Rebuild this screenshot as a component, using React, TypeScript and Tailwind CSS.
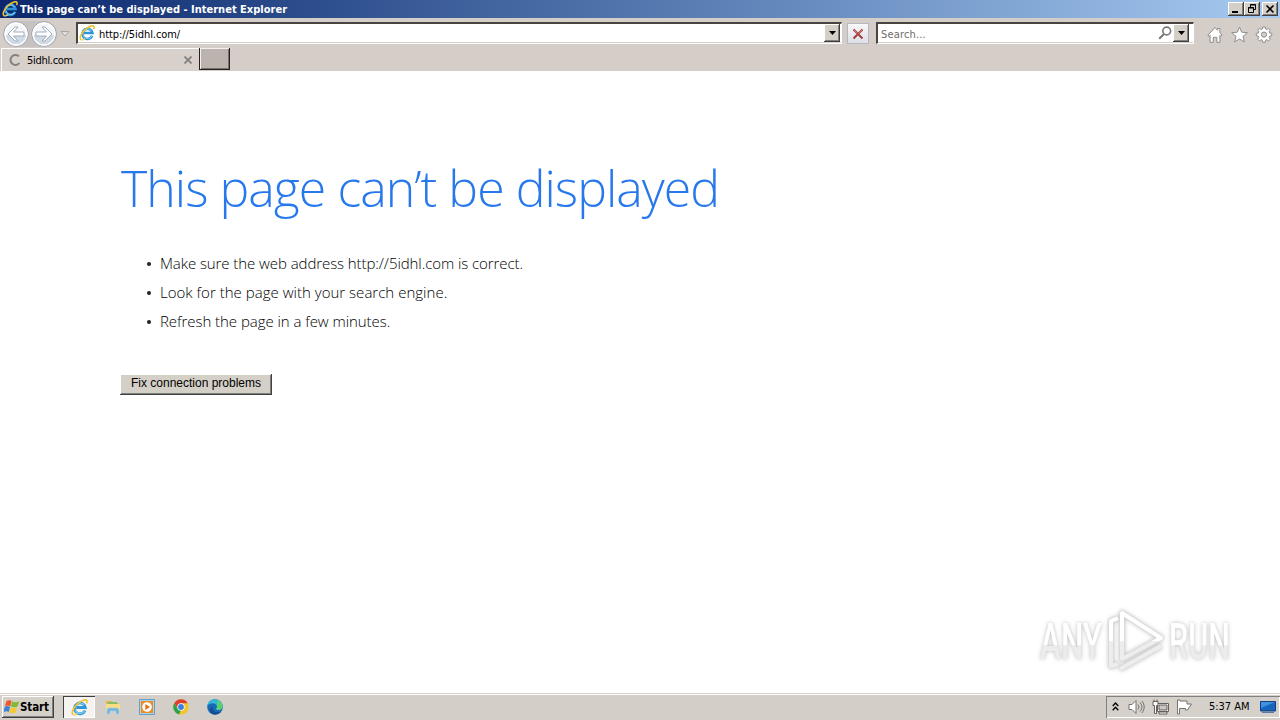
import type { ReactNode } from 'react';

const tips = [
  { text: 'Make sure the web address http://5idhl.com is correct.', tracking: 'tracking-[-0.075px]' },
  { text: 'Look for the page with your search engine.', tracking: 'tracking-[0.02px]' },
  { text: 'Refresh the page in a few minutes.', tracking: 'tracking-[-0.05px]' },
];

const uiFont = "font-['DejaVu_Sans_Condensed','DejaVu_Sans',sans-serif]";
const raised = 'bg-[#d4d0c8] shadow-[inset_-1px_-1px_#404040,inset_1px_1px_#fff,inset_-2px_-2px_#808080]';

function IeIcon({ className }: { className: string }) {
  return (
    <svg viewBox="0 0 16 16" className={className} fill="none">
      <path d="M13.2 10.8A5.1 5.1 0 1 1 13.5 8H5" stroke="#2e96d8" strokeWidth="2.6" />
      <path d="M12.9 11A4.8 4.8 0 0 1 4 10M4.4 6.6a4.6 4.6 0 0 1 8-.8" stroke="#7fd0f3" strokeWidth="1" />
      <path d="M2.2 14.7C-.5 13 3 7 7.2 3.7 10.5 1.1 14.4-.3 15 1.7c.2.7 0 1.5-.4 2.4" stroke="#f2c12e" strokeWidth="1.6" />
      <path d="M2.2 14.7c1 .5 2.7-.1 4-.9" stroke="#f6d666" strokeWidth="1.3" />
    </svg>
  );
}

function NavButton({ flip }: { flip?: boolean }) {
  return (
    <svg viewBox="0 0 26 26" className="h-[26px] w-[26px] shrink-0">
      <circle cx="13" cy="13" r="12.2" fill="#f3f5f8" stroke="#929aa5" />
      <path d="M2 14h22a11 11 0 0 1-22 0z" fill="#cfdae5" />
      <circle cx="13" cy="13" r="11" fill="none" stroke="#fff" strokeWidth="1.4" />
      <path
        d="M5 13l7-7h3l-4.5 5H21v4H10.5l4.5 5h-3z"
        fill="#fff"
        stroke="#9ba6b4"
        strokeWidth=".9"
        transform={flip ? 'translate(26 0) scale(-1 1)' : undefined}
      />
    </svg>
  );
}

function DropButton() {
  return (
    <button className={`flex h-[18px] w-4 shrink-0 items-center justify-center ${raised}`}>
      <svg viewBox="0 0 7 4" className="h-1 w-[7px]"><path d="M0 0h7L3.5 4z" /></svg>
    </button>
  );
}

function WinButton({ children }: { children: ReactNode }) {
  return (
    <button className={`h-[14px] w-4 ${raised}`}>
      <svg viewBox="0 0 16 14" className="h-[14px] w-4" fill="none" stroke="#000">{children}</svg>
    </button>
  );
}

function TitleBar() {
  return (
    <div className="flex h-[18px] items-center bg-linear-to-r from-[#0c276d] to-[#a6caf0] pr-[2px] pl-[2px]">
      <IeIcon className="h-4 w-4 shrink-0" />
      <span className="ml-[2px] pt-px text-[11px] leading-[17px] font-bold tracking-[0.01px] whitespace-nowrap text-white">
        This page can’t be displayed - Internet Explorer
      </span>
      <div className="ml-auto flex">
        <WinButton><path d="M4 10h6" strokeWidth="2" /></WinButton>
        <WinButton>
          <path d="M6.5 6V2.5h5v5H10M6 3h6" />
          <path d="M4.5 5.5h5v5h-5zM4 6h6" />
        </WinButton>
        <div className="ml-[2px] flex">
          <WinButton><path d="M4.5 3.5l7 7M11.5 3.5l-7 7" strokeWidth="1.6" /></WinButton>
        </div>
      </div>
    </div>
  );
}

function AddressRow() {
  const field = 'flex h-[22px] items-start border-t-2 border-l-2 border-r border-b border-t-[#48443f] border-l-[#48443f] border-r-white border-b-white bg-white shadow-[inset_0_-1px_#d4d0c8]';
  return (
    <div className="flex h-[30px] items-start pt-1">
      <div className="ml-[3px] flex gap-[2px] rounded-full bg-[#bcbbbd]/60 -mt-px">
        <NavButton />
        <NavButton flip />
      </div>
      <svg viewBox="0 0 10 6" className="mt-[9px] ml-[3px] h-[6px] w-[10px]"><path d="M1 .5h8L5 5z" fill="#e2dfdb" stroke="#aaa6a1" /></svg>
      <div className={`ml-[6px] w-[766px] ${field}`}>
        <IeIcon className="mt-px ml-px h-4 w-4" />
        <span className="ml-1 pt-[2px] text-[11px] leading-[17px] tracking-[-0.07px]">http://5idhl.com/</span>
        <div className="mr-px ml-auto"><DropButton /></div>
      </div>
      <button className="mt-px ml-[5px] flex h-[21px] w-[22px] items-center justify-center border border-[#b6b7c0] bg-linear-to-b from-[#f8f8fa] to-[#dedfe7]">
        <svg viewBox="0 0 12 12" className="h-3 w-3" fill="none">
          <path d="M1.5 1.5l9 9M10.5 1.5l-9 9" stroke="#a33c40" strokeWidth="2" />
          <path d="M1.5 1.5l4 4M10.5 1.5l-4 4" stroke="#d77877" strokeWidth="1" />
        </svg>
      </button>
      <div className={`ml-[7px] w-[318px] ${field}`}>
        <span className="ml-[3px] pt-[2px] text-[11px] leading-[17px] tracking-[0.17px] text-[#706d6a]">Search...</span>
        <svg viewBox="0 0 14 14" className="mt-[2px] ml-auto h-[14px] w-[14px]" fill="none" stroke="#77777a" strokeWidth="1.6">
          <circle cx="8.7" cy="5" r="3.9" />
          <path d="M6 8l-4.8 4.7" strokeWidth="2" />
        </svg>
        <div className="mr-1 ml-[1px]"><DropButton /></div>
      </div>
      <svg viewBox="0 0 66 18" className="mt-1 ml-[13px] h-[18px] w-[66px]" fill="#fff" stroke="#8e8d8d">
        <path d="M.8 9.3L8 1.6l2.6 2.7V2.5h2.3v4.2l2.3 2.6-1.3 1-1-1v7H9.8v-5H6.3v5H3.1v-7l-1 1z" />
        <path d="M32.5 1l2.2 5.2 5.6.5-4.3 3.7 1.4 5.5-4.9-2.9-4.9 2.9 1.4-5.5-4.3-3.7 5.6-.5z" />
        <path d="M55.8 1h2.4l.4 2 1.3.5 1.7-1.2L63.3 4l-1.2 1.7.5 1.3 2.1.4v2.4l-2.1.4-.5 1.3 1.2 1.7-1.7 1.7-1.7-1.2-1.3.5-.4 2.1h-2.4l-.4-2.1-1.3-.5-1.7 1.2-1.7-1.7 1.2-1.7-.5-1.3-2.1-.4V7.4l2.1-.4.5-1.3L50.7 4l1.7-1.7 1.7 1.2 1.3-.5z" />
        <circle cx="57" cy="8.6" r="2.6" fill="#d4cdc8" />
      </svg>
    </div>
  );
}

function Tabs() {
  return (
    <div className="flex h-[23px] items-start">
      <div className="ml-[1px] flex h-[23px] w-[198px] items-center border-t border-l border-white bg-[#d8d0cb] pr-[7px] pl-[7px]">
        <svg viewBox="0 0 12 12" className="h-3 w-3" fill="none"><path d="M10 2.4A5 5 0 1 0 10.5 9" stroke="#85817e" strokeWidth="2" /></svg>
        <span className="ml-[6px] pt-[2px] text-[11px] tracking-[-0.3px]">5idhl.com</span>
        <svg viewBox="0 0 8 8" className="ml-auto h-2 w-2"><path d="M.5.5l7 7M7.5.5l-7 7" stroke="#827d79" strokeWidth="1.7" /></svg>
      </div>
      <button className="h-[22px] w-[31px] border-r border-b border-l border-[#24211f] bg-[#bcb3ae] shadow-[inset_1px_1px_#f5f0ec,inset_-1px_-1px_#77716d]" />
    </div>
  );
}

function Watermark() {
  return (
    <svg viewBox="0 0 214 76" className="absolute right-[32px] bottom-[11px] h-[76px] w-[214px] overflow-visible drop-shadow-[0_0_2px_#bbb]">
      <defs>
        <linearGradient id="word" x1="0" y1="0" x2="0" y2="1">
          <stop offset="56%" stopColor="#fff" />
          <stop offset="57%" stopColor="#ececec" />
        </linearGradient>
        <linearGradient id="mark" gradientUnits="userSpaceOnUse" x1="0" y1="4" x2="0" y2="66">
          <stop offset="50%" stopColor="#fff" />
          <stop offset="51%" stopColor="#ededed" />
        </linearGradient>
      </defs>
      <g fill="url(#word)" className="font-['Roboto',sans-serif] text-[50px] font-medium">
        <text transform="translate(6 52.5) scale(.63 1)">ANY</text>
        <text transform="translate(135 52.5) scale(.61 1)">RUN</text>
      </g>
      <g fill="none" strokeLinejoin="round">
        <path d="M88 7V53L127 32ZM84 12l-7 3v45l7-2M86 63l41-23" stroke="#dadada" strokeWidth="5.2" />
        <path d="M88 7V53L127 32ZM84 12l-7 3v45l7-2M86 63l41-23" stroke="url(#mark)" strokeWidth="4" />
      </g>
    </svg>
  );
}

function Taskbar() {
  return (
    <footer className="flex h-[27px] shrink-0 items-start border-t border-[#d4d0c8] bg-[#d4cec8] pt-[2px] shadow-[inset_0_1px_#fff]">
      <button className={`ml-[2px] flex h-[22px] w-[52px] items-center pl-[2px] ${raised}`}>
        <svg viewBox="0 0 16 16" className="h-4 w-4 shrink-0">
          <path d="M2.4 2.2C4.5.8 6 1 7.7 2.1L6.3 7.3C4.6 6.2 3 6.2 1 7.2z" fill="#ee572a" />
          <path d="M8.3 2.4c1.7 1 4.5 1 7-.1L13.5 7.6c-2 1-4.6 1-6.6 0z" fill="#81ba35" />
          <path d="M.8 7.8c2-1 3.6-.9 5.3.1l-1.4 5.2c-1.7-1-3.2-1-5.2.1z" fill="#3a83d0" />
          <path d="M6.7 8.2c1.7 1 4.3 1 6.5 0l-1.5 5.4c-2.1 1-4.4 1-6.4 0z" fill="#f8c931" />
        </svg>
        <span className="pt-px text-[11.5px] font-bold tracking-[-0.1px]">Start</span>
      </button>
      <div className="ml-[9px] flex h-[22px] w-8 items-center justify-center bg-[#f5f3f1] shadow-[inset_1px_1px_#404040,inset_-1px_-1px_#fff]">
        <IeIcon className="h-[17px] w-[17px]" />
      </div>
      <div className="mt-[3px] ml-[10px] flex gap-[18px]">
        <svg viewBox="0 0 16 16" className="h-4 w-4">
          <path d="M1 2h6l1 2h6v8H1z" fill="#dfb94e" />
          <path d="M3 3h9v5H3z" fill="#87bd68" />
          <path d="M1 5h14v7H1z" fill="#f7dd83" />
          <path d="M2 15v-4q0-2 2-2h8q2 0 2 2v4h-3v-3H5v3z" fill="#71b4df" stroke="#a4d5ee" strokeWidth=".6" />
        </svg>
        <svg viewBox="0 0 16 16" className="h-4 w-4">
          <path d="M.5.5h15v15H.5z" fill="#a9d5ef" stroke="#659fc9" />
          <path d="M2 2h12v12H2z" fill="#ee8b20" />
          <circle cx="8" cy="8" r="4.8" fill="#fff" />
          <path d="M6.3 5l4.7 3-4.7 3z" fill="#e86f12" />
        </svg>
        <svg viewBox="0 0 16 16" className="h-4 w-4">
          <circle cx="8" cy="8" r="7.7" fill="#f4c62e" />
          <path d="M1.3 4.1A7.7 7.7 0 0 1 14.7 4.2H8L5 10z" fill="#dc3f30" />
          <path d="M1.3 4.1L5 10l3 1.6-2 3.8A7.7 7.7 0 0 1 1.3 4.1z" fill="#2aa34c" />
          <circle cx="8" cy="8" r="3.7" fill="#fff" />
          <circle cx="8" cy="8" r="2.9" fill="#397de0" />
        </svg>
        <svg viewBox="0 0 16 16" className="h-4 w-4">
          <circle cx="8" cy="8" r="7.8" fill="#1869b7" />
          <path d="M.3 7C1 .8 7-.8 11.2 1.1 15.5 3 16.6 8 14.4 10c-2 1.7-5.2.7-5.1-.4.1-1 1.3-1.1.4-3C8 3.4 2.9 3.3.3 7z" fill="#35b5d6" />
          <path d="M11 1c4.4 2 5.5 7 3.4 9-2 1.7-5.2.7-5.1-.4.1-1 1.3-1.1.7-2.6z" fill="#5bd16e" />
          <path d="M6 7.5c-1.5 4 2.5 6.8 7.8 5.2-2 3-6.8 3.8-9.6 1.3C1.7 11.9 3 8 6 7.5z" fill="#174d91" />
        </svg>
      </div>
      <div className="ml-auto flex h-[22px] w-[174px] items-center bg-[#d5d0c9] pl-[6px] shadow-[inset_1px_1px_#808080,inset_-1px_-1px_#fff]">
        <svg viewBox="0 0 7 9" className="mb-[2px] h-[9px] w-[7px]" fill="none" stroke="#000" strokeWidth="1.3"><path d="M.7 4l2.8-3 2.8 3M.7 8.3l2.8-3 2.8 3" /></svg>
        <svg viewBox="0 0 17 16" className="ml-[9px] h-4 w-[17px]" fill="none" stroke="#77736f">
          <path d="M1 5.5h3l4-4v13l-4-4H1z" fill="#fff" />
          <path d="M10 5.5q2 2.5 0 5M12 3.5q4 4.5 0 9M14 2q4.5 6 0 12" />
        </svg>
        <svg viewBox="0 0 18 16" className="ml-[7px] h-4 w-[18px]" fill="#fff" stroke="#65615d">
          <path d="M5.5 4.5h11v8h-11zM7 15h8v-2H7z" />
          <path d="M7 6h8v5H7z" fill="#cbc8c4" />
          <path d="M1 2.5h5v4H4.5v8h-2v-8H1zM2 .5v2M5 .5v2" />
        </svg>
        <svg viewBox="0 0 17 16" className="ml-[6px] h-4 w-[17px]" fill="#fff" stroke="#77736f">
          <path d="M1.5 1v14h2V9.5h6v1.5h2l4-6h-4.5V2h-7V1z" />
        </svg>
        <span className="ml-4 pt-px text-[11px] tracking-[-0.03px] whitespace-nowrap">5:37 AM</span>
        <svg viewBox="0 0 16 14" className="ml-auto mr-[4px] h-[14px] w-4">
          <path d="M.5 1.5h15v9.5H.5z" fill="#1764bd" stroke="#133e81" />
          <path d="M1 2h14L1 8z" fill="#4190df" />
          <path d="M2 12.5h12" stroke="#5b7aa5" />
        </svg>
      </div>
    </footer>
  );
}

export default function App() {
  return (
    <div className={`flex h-[720px] w-[1280px] flex-col overflow-hidden bg-white text-black ${uiFont}`}>
      <header className="h-[71px] shrink-0 bg-[#d4cdc8]">
        <TitleBar />
        <AddressRow />
        <Tabs />
      </header>
      <main className="relative flex-1 pt-[82px] pl-[120px] font-['Open_Sans',sans-serif]">
        <h1 className="ml-px text-[50px] leading-[70px] font-light tracking-[-0.96px] whitespace-nowrap text-[#2778ec]">
          This page can’t be displayed
        </h1>
        <ul className="mt-[26px] ml-[26px]">
          {tips.map((tip) => (
            <li key={tip.text} className="flex h-[29px] items-center text-[15px] font-light whitespace-nowrap">
              <span className="mr-[10px] ml-px h-1 w-1 rounded-full bg-[#222]" />
              <span className={`-ml-px ${tip.tracking}`}>{tip.text}</span>
            </li>
          ))}
        </ul>
        <button className={`mt-[38px] block h-[21px] w-[152px] pb-[2px] font-['Liberation_Sans',sans-serif] text-[12px] leading-[19px] whitespace-nowrap ${raised}`}>
          Fix connection problems
        </button>
        <Watermark />
      </main>
      <Taskbar />
    </div>
  );
}
